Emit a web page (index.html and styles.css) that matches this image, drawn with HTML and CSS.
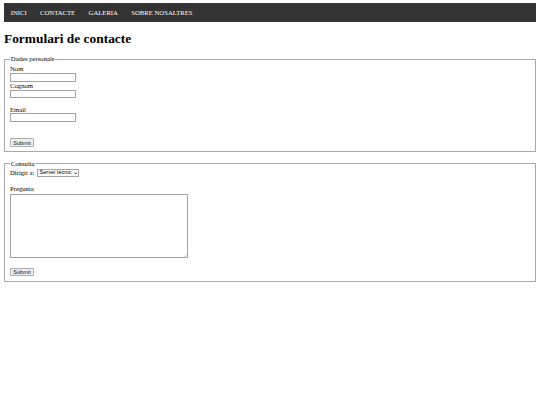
FILE: index.html
```html
<!DOCTYPE html>
<html lang="ca">
<head>
<meta charset="utf-8">
<title>Formulari de contacte</title>
<link rel="stylesheet" href="styles.css">
</head>
<body class="page">
<nav>
  <ul class="menu">
    <li><a class="menu-link" href="#">INICI</a></li>
    <li><a class="menu-link" href="#">CONTACTE</a></li>
    <li><a class="menu-link" href="#">GALERIA</a></li>
    <li><a class="menu-link" href="#">SOBRE NOSALTRES</a></li>
  </ul>
</nav>
<h1 class="title">Formulari de contacte</h1>
<form class="form">
  <fieldset class="group">
    <legend class="group-title">Dades personals</legend>
    <label class="field-label" for="nom">Nom</label>
    <input class="text-input" id="nom" type="text">
    <label class="field-label" for="cognom">Cognom</label>
    <input class="text-input" id="cognom" type="text">
    <label class="field-label field-label-spaced" for="email">Email</label>
    <input class="text-input" id="email" type="email">
    <div class="actions actions-first">
      <button class="btn" type="submit">Submit</button>
    </div>
  </fieldset>
</form>
<form class="form">
  <fieldset class="group">
    <legend class="group-title">Consulta</legend>
    <div class="choice-row">
      <label class="inline-label" for="dest">Dirigit a:</label>
      <span class="select-wrap">
        <select class="select" id="dest">
          <option>Servei tècnic</option>
          <option>Comercial</option>
          <option>Administració</option>
        </select>
        <svg class="select-arrow" viewBox="0 0 6 4" width="4" height="3" aria-hidden="true"><path d="M0.6 0.6 L3 3 L5.4 0.6" fill="none" stroke="#000" stroke-width="1.3"/></svg>
      </span>
    </div>
    <label class="field-label field-label-question" for="preg">Pregunta</label>
    <span class="area-wrap">
      <textarea class="area" id="preg"></textarea>
      <svg class="area-grip" viewBox="0 0 4 4" width="4" height="4" aria-hidden="true"><path d="M0.5 3.8 L3.8 0.5 M2.2 3.8 L3.8 2.2" stroke="#8a8a8a" stroke-width="0.5"/></svg>
    </span>
    <div class="actions actions-second">
      <button class="btn" type="submit">Submit</button>
    </div>
  </fieldset>
</form>
</body>
</html>
```
FILE: styles.css
```css
.page {
  margin: 3px 4px;
  font-family: "Liberation Serif", "Times New Roman", serif;
  font-size: 6.7px;
  line-height: 7.7px;
  background: #fff;
  color: #000;
}
.menu {
  list-style: none;
  margin: 0;
  padding: 0;
  display: flex;
  background-color: #333;
}
.menu-link {
  display: block;
  color: #fff;
  text-decoration: none;
  font-size: 6.7px;
  line-height: 7.7px;
  padding: 5.65px 6.7px;
}
.title {
  font-size: 13.4px;
  line-height: 15.4px;
  margin: 9px 0;
  font-weight: bold;
}
.form {
  margin: 0 0 7.5px;
}
.group {
  margin: 0;
  border: 1px solid #a9a9a9;
  padding: 2.4px 5px 4.6px;
  min-width: 0;
}
.group-title {
  padding: 0 0.8px;
  font-size: 6.7px;
  line-height: 7.7px;
}
.field-label {
  display: block;
  line-height: 7.7px;
}
.field-label-spaced {
  margin-top: 7.3px;
}
.field-label-question {
  margin-top: 8px;
}
.text-input {
  display: block;
  box-sizing: border-box;
  width: 66px;
  height: 8.7px;
  margin: 0;
  padding: 0 1px;
  border: 1px solid #a3a3a3;
  border-radius: 0.5px;
  background: #fff;
  font-size: 5.6px;
}
.actions {
  display: flex;
}
.actions-first {
  margin-top: 16.4px;
}
.actions-second {
  margin-top: 10.5px;
}
.btn {
  box-sizing: border-box;
  height: 8.4px;
  width: 24px;
  margin: 0;
  padding: 0;
  border: 1px solid #adadad;
  border-radius: 1px;
  background: #efefef;
  color: #111;
  font-family: "Liberation Sans", Arial, sans-serif;
  font-size: 5.6px;
  line-height: 6px;
}
.choice-row {
  display: flex;
  align-items: center;
  gap: 2.6px;
  height: 8.4px;
  margin-top: -1px;
}
.inline-label {
  line-height: 7.7px;
}
.select-wrap {
  position: relative;
  display: block;
}
.select {
  display: block;
  box-sizing: border-box;
  width: 41.6px;
  height: 7.8px;
  margin: 0;
  padding: 0 5px 0 1.5px;
  border: 1px solid #a3a3a3;
  border-radius: 0.5px;
  background: #fff;
  color: #000;
  font-family: "Liberation Sans", Arial, sans-serif;
  font-size: 5.6px;
  line-height: 5.6px;
  appearance: none;
  -webkit-appearance: none;
}
.select-arrow {
  position: absolute;
  right: 1.4px;
  top: 2.6px;
  width: 3.6px;
  height: 2.6px;
}
.area-wrap {
  position: relative;
  display: block;
  width: 178px;
  height: 64px;
  margin-top: 0.5px;
}
.area {
  display: block;
  box-sizing: border-box;
  width: 178px;
  height: 64px;
  margin: 0;
  padding: 1px;
  border: 1px solid #a3a3a3;
  border-radius: 0.5px;
  background: #fff;
  resize: none;
  font-size: 5.6px;
}
.area-grip {
  position: absolute;
  right: 1px;
  bottom: 1px;
  width: 3px;
  height: 3px;
}
```
